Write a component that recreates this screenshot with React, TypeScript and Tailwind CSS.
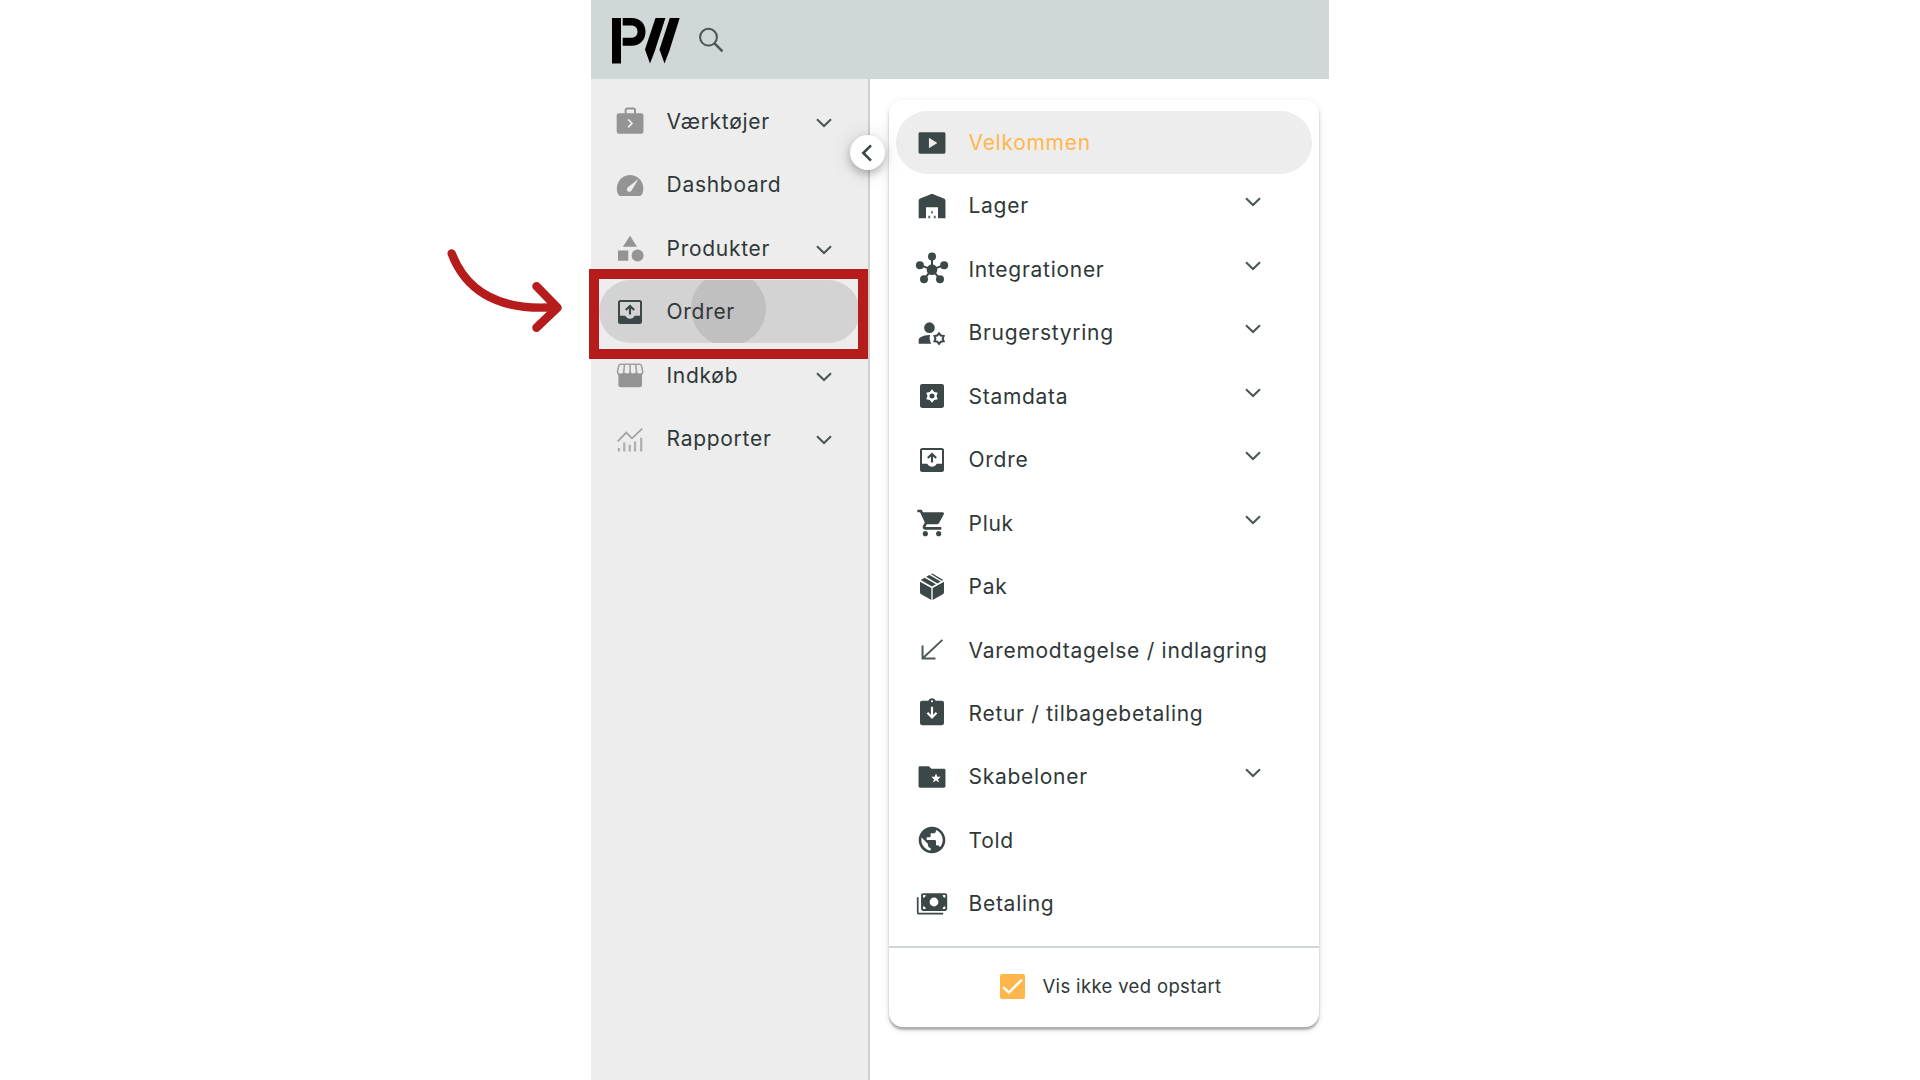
import type { ReactNode } from 'react';
import clsx from 'clsx';
import { MdPublic, MdShoppingCart } from 'react-icons/md';

type Item = {
  label: string;
  icon: ReactNode;
  expandable?: boolean;
  active?: boolean;
};

function Icon({ children }: { children: ReactNode }) {
  return (
    <svg viewBox="0 0 24 24" className="h-8 w-8 overflow-visible" fill="currentColor" fillRule="evenodd">
      {children}
    </svg>
  );
}

function Chevron({ className }: { className?: string }) {
  return (
    <svg
      viewBox="0 0 16 10"
      className={clsx('h-[10px] w-4 text-[#4a5555]', className)}
      fill="none"
      stroke="currentColor"
      strokeWidth="2"
    >
      <path d="M1 1.2l7 6.8 7-6.8" />
    </svg>
  );
}

const gear = 'M0-4L1.350-2.340 3.460-2 2.700 0 3.460 2 1.350 2.340 0 4-1.350 2.340-3.460 2-2.700 0-3.460-2-1.350-2.340z';

const outbox = (
  <Icon>
    <path d="M4.700 3h14.600c1 0 1.700.7 1.700 1.700v14.600c0 1-.7 1.700-1.700 1.700H4.700c-1 0-1.700-.7-1.700-1.700V4.700C3 3.700 3.700 3 4.700 3zM4.500 4.500v10.300h4c.7 1.400 2 2.200 3.500 2.200s2.800-.8 3.500-2.200h4V4.500z" />
    <path d="M12 6.300l3.700 3.700-1.100 1.100-1.800-1.800v4.500h-1.600V9.300l-1.800 1.800L8.300 10z" />
  </Icon>
);

const mainMenu: Item[] = [
  {
    label: 'Værktøjer',
    expandable: true,
    icon: (
      <Icon>
        <path d="M3.600 6.200H8V3.600c0-1 .7-1.800 1.800-1.800h4.900c1 0 1.800.8 1.800 1.800v2.600h4c.9 0 1.600.7 1.600 1.600v12.100c0 .9-.7 1.600-1.600 1.600H3.600c-.9 0-1.600-.7-1.600-1.600V7.800c0-.9.7-1.600 1.600-1.600zm5.900 0H15V3.700c0-.2-.1-.4-.4-.4H9.900c-.3 0-.4.2-.4.4z" />
        <path d="M10.600 10.800l2.900 3-2.900 3" fill="none" stroke="#ededed" strokeWidth="1.200" />
      </Icon>
    ),
  },
  {
    label: 'Dashboard',
    icon: (
      <Icon>
        <path d="M4.600 20.200c-.6 0-1-.3-1.300-.8A10 10 0 1 1 20.800 19.400c-.3.5-.8.8-1.400.8z" />
        <path d="M18.400 7.500l-8 6.200c-1.300 1.200-.8 2.900.5 3.300 1 .3 1.800-.1 2.300-.9z" fill="#ededed" />
      </Icon>
    ),
  },
  {
    label: 'Produkter',
    expandable: true,
    icon: (
      <Icon>
        <path d="M12 2.900l5.300 8.100H6.700zM3 13.900h7.700v7.700H3z" />
        <circle cx="17.700" cy="17.600" r="4.500" />
      </Icon>
    ),
  },
  { label: 'Ordrer', active: true, icon: outbox },
  {
    label: 'Indkøb',
    expandable: true,
    icon: (
      <Icon>
        <path d="M3.300 10.800h17.700v8.700c0 1-.7 1.700-1.700 1.700H5c-1 0-1.700-.7-1.700-1.700z" />
        <path
          d="M4.800 3.900h14.600c.6 0 .9.300 1.100.8l1 4.500c.3 1.600-.8 2.700-2.200 2.700-1.300 0-2.300-.9-2.400-2.100L16.200 3.900M12.100 3.900v6M7.900 3.900l-.6 5.900c-.2 1.200-1.100 2.100-2.400 2.100-1.500 0-2.500-1.100-2.200-2.700l1-4.500c.2-.5.500-.8 1.100-.8M7.300 9.400c.2 3 4.700 3 4.800 0 .1 3 4.600 3 4.800 0"
          fill="none"
          stroke="currentColor"
          strokeWidth="1.200"
          opacity=".85"
        />
      </Icon>
    ),
  },
  {
    label: 'Rapporter',
    expandable: true,
    icon: (
      <Icon>
        <path
          d="M2.800 13.800l6.400-6.600 4.300 4.300 7.700-7.200"
          fill="none"
          stroke="currentColor"
          strokeWidth="1.300"
          opacity=".85"
        />
        <path
          d="M3.700 18.700v2.600M7.700 14.700v6.600M11.800 16.400v4.900M15.800 13.800v7.500M20.400 11v10.300"
          fill="none"
          stroke="currentColor"
          strokeWidth="1.700"
          opacity=".7"
        />
      </Icon>
    ),
  },
];

const guideMenu: Item[] = [
  {
    label: 'Velkommen',
    active: true,
    icon: (
      <Icon>
        <path d="M3 4h18c.6 0 1.100.5 1.100 1.100v13.800c0 .6-.5 1.100-1.100 1.100H3c-.6 0-1.100-.5-1.100-1.100V5.100C1.900 4.500 2.400 4 3 4zm6.700 4v8l6.300-4z" />
      </Icon>
    ),
  },
  {
    label: 'Lager',
    expandable: true,
    icon: (
      <Icon>
        <path d="M2 21.200V8.100c0-.8.4-1.400 1.100-1.700L12 2.900l8.900 3.500c.7.300 1.200.9 1.200 1.700v13.100h-5.600v-8.300h-9v8.300z" />
        <path d="M11.300 16h1.400v1.600h-1.400zM9.200 19.400h1.500v1.800H9.200zM13.300 19.400h1.500v1.800h-1.500z" opacity=".8" />
      </Icon>
    ),
  },
  {
    label: 'Integrationer',
    expandable: true,
    icon: (
      <Icon>
        <path
          d="M12 2.700v9.700M2.800 9.100l9.200 3.300 9.200-3.300M5.800 19.800l6.200-7.400 6.200 7.400"
          fill="none"
          stroke="currentColor"
          strokeWidth="1.500"
        />
        <circle cx="12" cy="12.500" r="4" />
        <circle cx="12" cy="2.700" r="3" />
        <circle cx="2.900" cy="9.200" r="3" />
        <circle cx="21.100" cy="9.200" r="3" />
        <circle cx="6" cy="19.700" r="3" />
        <circle cx="18" cy="19.700" r="3" />
      </Icon>
    ),
  },
  {
    label: 'Brugerstyring',
    expandable: true,
    icon: (
      <Icon>
        <circle cx="10.100" cy="8" r="4" />
        <path d="M2 20v-2.500c0-1 .5-1.800 1.400-2.300 2.300-1.200 4.700-1.800 7.200-1.700-.7 2.300-.4 4.600.9 6.500z" />
        <path d={gear} transform="translate(17.300 16.200)" fill="none" stroke="currentColor" strokeWidth="1.500" />
      </Icon>
    ),
  },
  {
    label: 'Stamdata',
    expandable: true,
    icon: (
      <Icon>
        <rect x="3" y="3" width="18" height="18" rx="1.600" />
        <path d={gear} transform="translate(12 12) scale(1.250)" fill="#fff" />
        <circle cx="12" cy="12" r="1.900" />
      </Icon>
    ),
  },
  { label: 'Ordre', expandable: true, icon: outbox },
  { label: 'Pluk', expandable: true, icon: <MdShoppingCart className="h-8 w-8" /> },
  {
    label: 'Pak',
    icon: (
      <Icon>
        <path d="M3 8l8.500 4.800v8.900L3.900 17.500c-.6-.3-.9-.8-.9-1.500zM21 8l-8.500 4.800v8.900l7.600-4.200c.6-.3.9-.8.9-1.500z" />
        <path d="M3.500 6.700l3-1.700 8.500 4.900-3 1.700zM7.600 4.400l2.400-1.400 8.500 4.900-2.400 1.400zM11.100 2.300c.6-.3 1.200-.3 1.800 0l7.600 4.400-1.200.7z" />
      </Icon>
    ),
  },
  {
    label: 'Varemodtagelse / indlagring',
    icon: (
      <Icon>
        <path
          d="M4.900 8.700v9.600h9.700M4.900 18.300L19.800 4.400"
          fill="none"
          stroke="currentColor"
          strokeWidth="1.500"
          opacity=".9"
        />
      </Icon>
    ),
  },
  {
    label: 'Retur / tilbagebetaling',
    icon: (
      <Icon>
        <path d="M4.600 2.900h4.700C9.700 1.700 10.700 1 12 1s2.300.7 2.700 1.900h4.700c.9 0 1.600.7 1.600 1.600v15c0 .9-.7 1.600-1.600 1.600H4.600c-.9 0-1.600-.7-1.600-1.600v-15c0-.9.7-1.600 1.600-1.600zM12 2.400a.8.8 0 1 0 0 1.600.8.8 0 0 0 0-1.600z" />
        <path d="M12 7.400v8M8.600 11.900l3.400 3.400 3.400-3.400" fill="none" stroke="#fff" strokeWidth="1.600" />
      </Icon>
    ),
  },
  {
    label: 'Skabeloner',
    expandable: true,
    icon: (
      <Icon>
        <path d="M3 3.900h6.600l2 2h9.400c.6 0 1.100.5 1.100 1.100v11.900c0 .6-.5 1.100-1.100 1.100H3c-.6 0-1.100-.5-1.100-1.100V5c0-.6.5-1.100 1.100-1.100zM15 9.300l-1 2.500-2.600.1 2.100 1.700-.8 2.600 2.300-1.500 2.300 1.500-.8-2.600 2.100-1.700-2.600-.1z" />
      </Icon>
    ),
  },
  { label: 'Told', icon: <MdPublic className="h-8 w-8" /> },
  {
    label: 'Betaling',
    icon: (
      <Icon>
        <path d="M5.400 3.900h16.400c.9 0 1.600.7 1.600 1.600v10.100c0 .9-.7 1.600-1.600 1.600H5.400c-.9 0-1.600-.7-1.600-1.600V5.500c0-.9.7-1.600 1.600-1.600zm8.100 3.300a3.300 3.300 0 1 0 0 6.600 3.300 3.300 0 0 0 0-6.600zM5.300 5.300v2c1.100 0 2-.9 2-2zm16.700 0h-2c0 1.100.9 2 2 2zM5.300 15.700h2c0-1.100-.9-2-2-2zm16.700 0v-2c-1.100 0-2 .9-2 2z" />
        <path d="M1.300 7v11.300c0 .7.4 1 1 1h18.100" fill="none" stroke="currentColor" strokeWidth="1.300" />
      </Icon>
    ),
  },
];

function SidebarItem({ label, icon, expandable, active }: Item) {
  return (
    <div
      className={clsx(
        'relative flex h-[63.45px] shrink-0 items-center overflow-hidden rounded-full pl-[14.5px]',
        active && 'bg-[#d3d3d3]',
      )}
    >
      {active && <span className="absolute -top-[9px] left-[92px] h-[75px] w-[75px] rounded-full bg-[#c0c0c0]" />}
      <span className={clsx('relative', active ? 'text-[#3c4747]' : 'text-[#949494]')}>{icon}</span>
      <span className="relative ml-[21px] flex-1">{label}</span>
      {expandable && <Chevron className="mt-[3px] mr-[27.5px]" />}
    </div>
  );
}

function GuideItem({ label, icon, expandable, active }: Item) {
  return (
    <div className={clsx('flex h-[63.45px] shrink-0 items-center rounded-full pl-[19.5px]', active && 'bg-[#ededed]')}>
      <span className="text-[#3c4747]">{icon}</span>
      <span className={clsx('ml-[21px] flex-1 whitespace-nowrap', active && 'text-[#ffb74d]')}>{label}</span>
      {expandable && <Chevron className="-mt-[7px] mr-[51px]" />}
    </div>
  );
}

function Logo() {
  return (
    <svg viewBox="0 0 68 46" className="h-[46px] w-[68px]" fill="#000">
      <path d="M0 0h9v45.500H0z" />
      <path d="M10.700 0h9C28 0 33.500 5.500 33.500 13.800S28 27.800 19.700 27.800h-9v-8h8.500c4 0 6.300-2.300 6.300-6s-2.300-6.200-6.300-6.200h-8.500z" />
      <path d="M43.500 0h9.900L42.800 33 38 45.500 33 31.500z" />
      <path d="M57.800 0h9.900L57.300 33l-4.800 12.500-5-14z" />
    </svg>
  );
}

export default function App() {
  return (
    <div className="relative flex h-[1080px] w-[1920px] justify-center overflow-hidden bg-white font-['Inter',sans-serif] text-[21px] leading-none tracking-[0.72px] text-[#2f3838]">
      <div className="flex w-[738px] flex-col">
        <header className="flex h-[79px] shrink-0 items-center bg-[#cfd8d6] pt-[2px] pl-[21px]">
          <Logo />
          <svg
            viewBox="0 0 26 26"
            className="-mt-[2px] ml-[18px] h-[26px] w-[26px]"
            fill="none"
            stroke="#4a5555"
            strokeWidth="2"
          >
            <circle cx="10.500" cy="10.200" r="8.400" />
            <path d="M16.500 16.300l8 8" strokeWidth="2.400" />
          </svg>
        </header>

        <div className="flex flex-1">
          <aside className="relative flex w-[279px] flex-col border-r-2 border-[#cfcfcf] bg-[#ededed] pt-[10.6px] pr-[8.5px] pl-2">
            {mainMenu.map((item) => (
              <SidebarItem key={item.label} {...item} />
            ))}
            <button className="absolute top-[56px] -right-[17px] flex h-[35px] w-[35px] items-center justify-center rounded-full bg-white shadow-[0_4px_8px_rgba(0,0,0,0.25),0_1px_24px_rgba(0,0,0,0.12)]">
              <svg viewBox="0 0 12 18" className="-ml-px h-[18px] w-3" fill="none" stroke="#3c4747" strokeWidth="2.600">
                <path d="M10 1.300L2.300 9l7.700 7.700" />
              </svg>
            </button>
          </aside>

          <main className="flex-1 pt-[21px] pl-[18.5px]">
            <section className="flex h-[927px] w-[430px] flex-col rounded-[14px] bg-white shadow-[0_3px_2px_rgba(0,0,0,0.26),0_2px_7px_rgba(0,0,0,0.13)]">
              <div className="flex h-[846px] flex-col pt-[10.8px] pr-[6.5px] pl-[7.5px]">
                {guideMenu.map((item) => (
                  <GuideItem key={item.label} {...item} />
                ))}
              </div>
              <label className="flex flex-1 items-center border-t-2 border-[#cfd8d6] pb-[2px] pl-[111px] text-[18.5px] tracking-[0.35px]">
                <span className="flex h-[25px] w-[25px] items-center justify-center rounded-[2px] bg-[#ffb74d]">
                  <svg viewBox="0 0 24 24" className="h-[25px] w-[25px]" fill="none" stroke="#fff" strokeWidth="2.300">
                    <path d="M3 12.500l5.500 5.300L21 5.500" />
                  </svg>
                </span>
                <span className="ml-[18px]">Vis ikke ved opstart</span>
              </label>
            </section>
          </main>
        </div>
      </div>

      {/* callout around "Ordrer" */}
      <div className="absolute top-[269px] left-[589px] h-[90px] w-[279px] border-[10px] border-[#b71c1c]" />
      <svg
        viewBox="0 0 130 100"
        className="absolute top-[240px] left-[440px] h-[100px] w-[130px]"
        fill="none"
        stroke="#b71c1c"
        strokeWidth="8.500"
        strokeLinecap="round"
        strokeLinejoin="round"
      >
        <path d="M11.700 13.500C24 46 53 72 116 67" />
        <path d="M96.500 46.300l21 21.400-21 20" />
      </svg>
    </div>
  );
}
